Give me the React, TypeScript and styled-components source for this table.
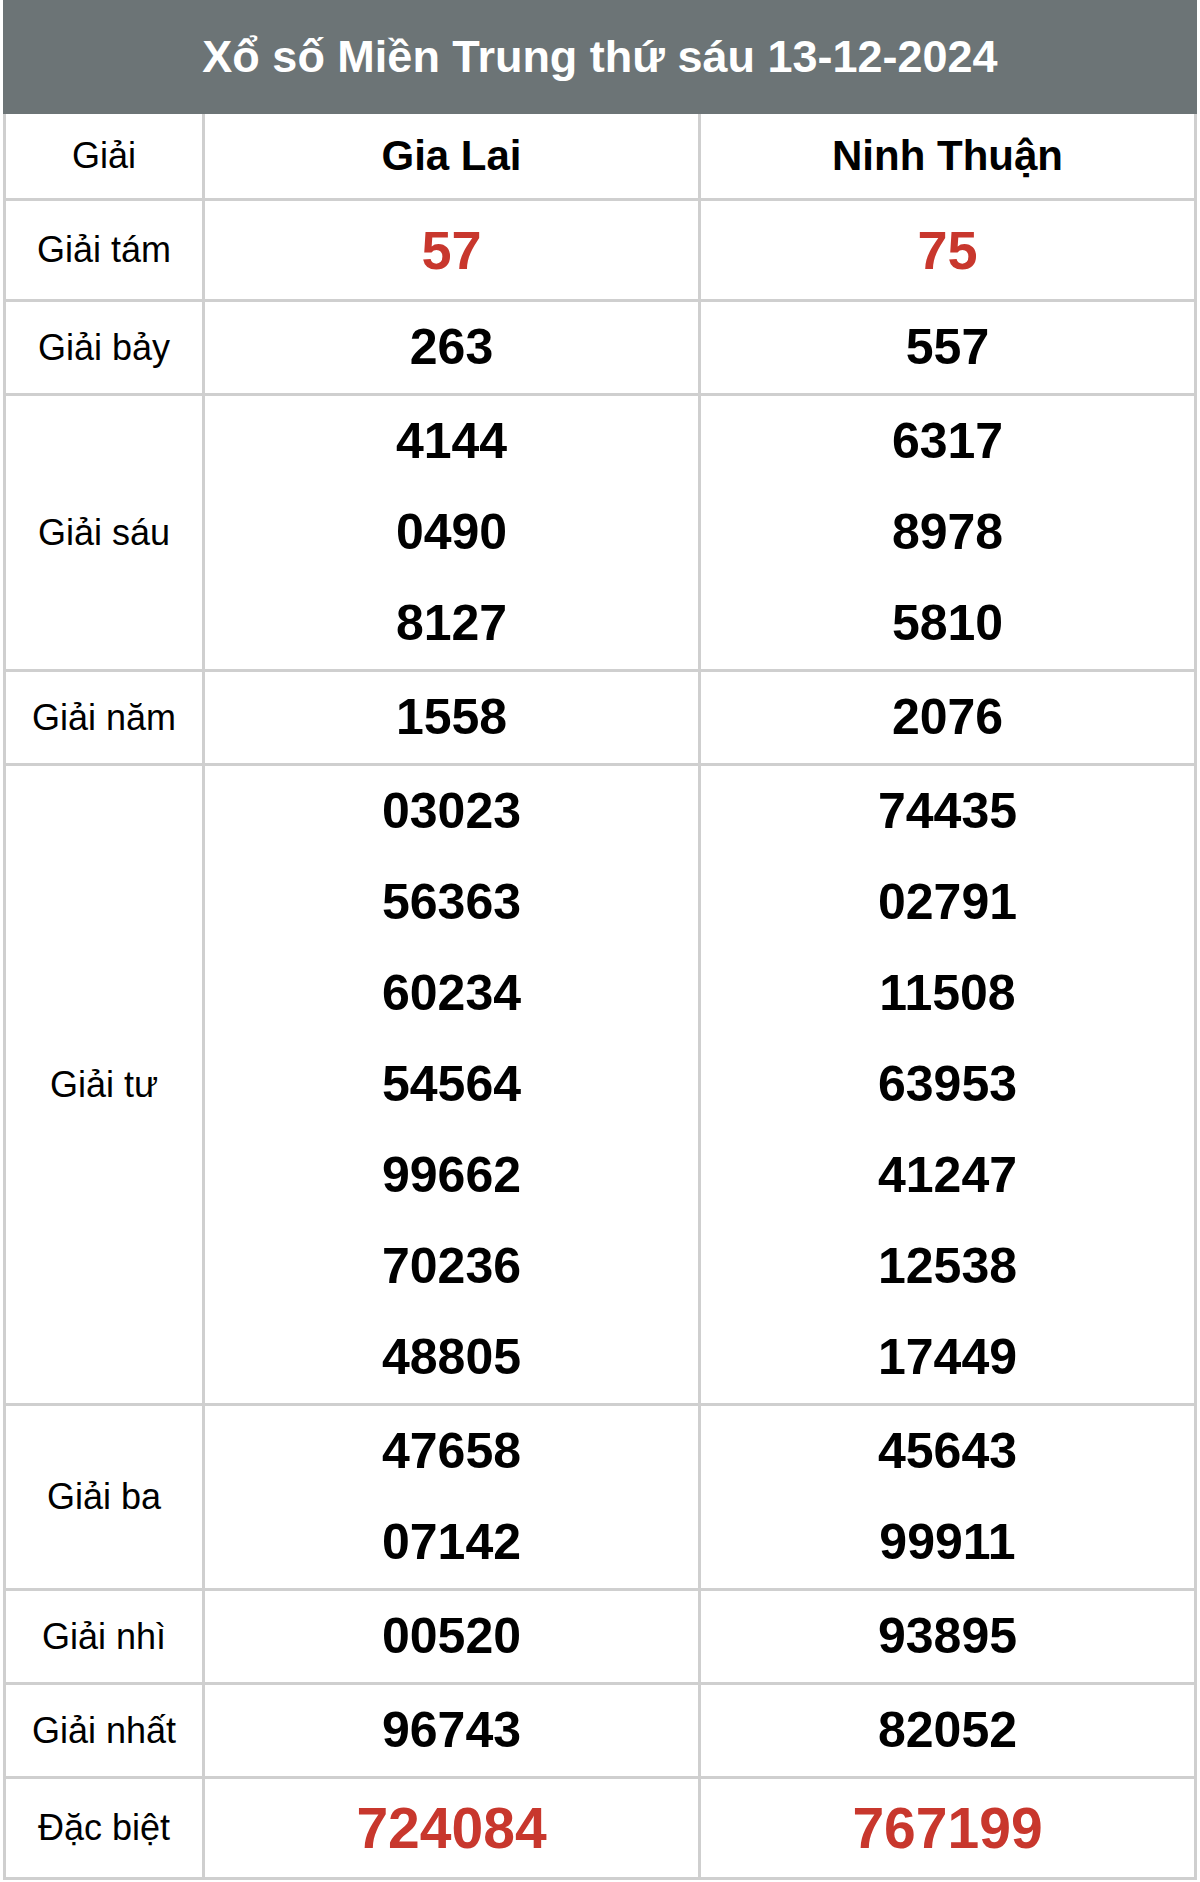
import React from 'react';
import styled, { createGlobalStyle } from 'styled-components';

const COLORS = {
  header: '#6c7476',
  border: '#cfcfcf',
  red: '#c8372d',
  text: '#000000',
};

type Prize = {
  label: string;
  gialai: string[];
  ninhthuan: string[];
  variant?: 'highlight' | 'special';
};

const PRIZES: Prize[] = [
  { label: 'Giải tám', gialai: ['57'], ninhthuan: ['75'], variant: 'highlight' },
  { label: 'Giải bảy', gialai: ['263'], ninhthuan: ['557'] },
  {
    label: 'Giải sáu',
    gialai: ['4144', '0490', '8127'],
    ninhthuan: ['6317', '8978', '5810'],
  },
  { label: 'Giải năm', gialai: ['1558'], ninhthuan: ['2076'] },
  {
    label: 'Giải tư',
    gialai: ['03023', '56363', '60234', '54564', '99662', '70236', '48805'],
    ninhthuan: ['74435', '02791', '11508', '63953', '41247', '12538', '17449'],
  },
  { label: 'Giải ba', gialai: ['47658', '07142'], ninhthuan: ['45643', '99911'] },
  { label: 'Giải nhì', gialai: ['00520'], ninhthuan: ['93895'] },
  { label: 'Giải nhất', gialai: ['96743'], ninhthuan: ['82052'] },
  { label: 'Đặc biệt', gialai: ['724084'], ninhthuan: ['767199'], variant: 'special' },
];

const App = () => {
  return (
    <>
      <GlobalStyle />
      <Page>
        <Board>
          <Title>Xổ số Miền Trung thứ sáu 13-12-2024</Title>
          <Row>
            <LabelCell $tall={false} $head>
              Giải
            </LabelCell>
            <ProvinceCell>Gia Lai</ProvinceCell>
            <ProvinceCell>Ninh Thuận</ProvinceCell>
          </Row>
          {PRIZES.map((prize) => (
            <Row key={prize.label}>
              <LabelCell $tall={!!prize.variant}>{prize.label}</LabelCell>
              <NumberCell>
                {prize.gialai.map((n) => (
                  <Number key={n} $variant={prize.variant}>
                    {n}
                  </Number>
                ))}
              </NumberCell>
              <NumberCell>
                {prize.ninhthuan.map((n) => (
                  <Number key={n} $variant={prize.variant}>
                    {n}
                  </Number>
                ))}
              </NumberCell>
            </Row>
          ))}
        </Board>
      </Page>
    </>
  );
};

const GlobalStyle = createGlobalStyle`
  html, body {
    margin: 0;
    padding: 0;
    background: #ffffff;
  }
  body {
    font-family: "Liberation Sans", Arial, sans-serif;
    color: ${COLORS.text};
  }
`;

const Page = styled.div`
  padding: 0 3px;
`;

const Board = styled.div`
  width: 1194px;
  box-sizing: border-box;
  border: 3px solid ${COLORS.border};
  border-top: none;
`;

const Title = styled.div`
  height: 114px;
  margin: 0 -3px;
  background: ${COLORS.header};
  color: #ffffff;
  font-size: 45px;
  font-weight: 700;
  display: flex;
  align-items: center;
  justify-content: center;
`;

const Row = styled.div`
  display: grid;
  grid-template-columns: 196px 493px 493px;
  column-gap: 3px;
  background: ${COLORS.border};
  border-bottom: 3px solid ${COLORS.border};

  &:last-child {
    border-bottom: none;
  }
`;

const Cell = styled.div`
  background: #ffffff;
  display: flex;
  flex-direction: column;
  align-items: center;
  justify-content: center;
`;

const LabelCell = styled(Cell)<{ $tall: boolean; $head?: boolean }>`
  font-size: 36px;
  min-height: ${(p) => (p.$head ? 84 : p.$tall ? 98 : 91)}px;
`;

const ProvinceCell = styled(Cell)`
  height: 84px;
  font-size: 42px;
  font-weight: 700;
`;

const NumberCell = styled(Cell)``;

const Number = styled.div<{ $variant?: 'highlight' | 'special' }>`
  font-weight: 700;
  line-height: ${(p) => (p.$variant ? 98 : 91)}px;
  font-size: ${(p) =>
    p.$variant === 'special' ? 57 : p.$variant === 'highlight' ? 54 : 50}px;
  color: ${(p) => (p.$variant ? COLORS.red : COLORS.text)};
`;

export default App;
